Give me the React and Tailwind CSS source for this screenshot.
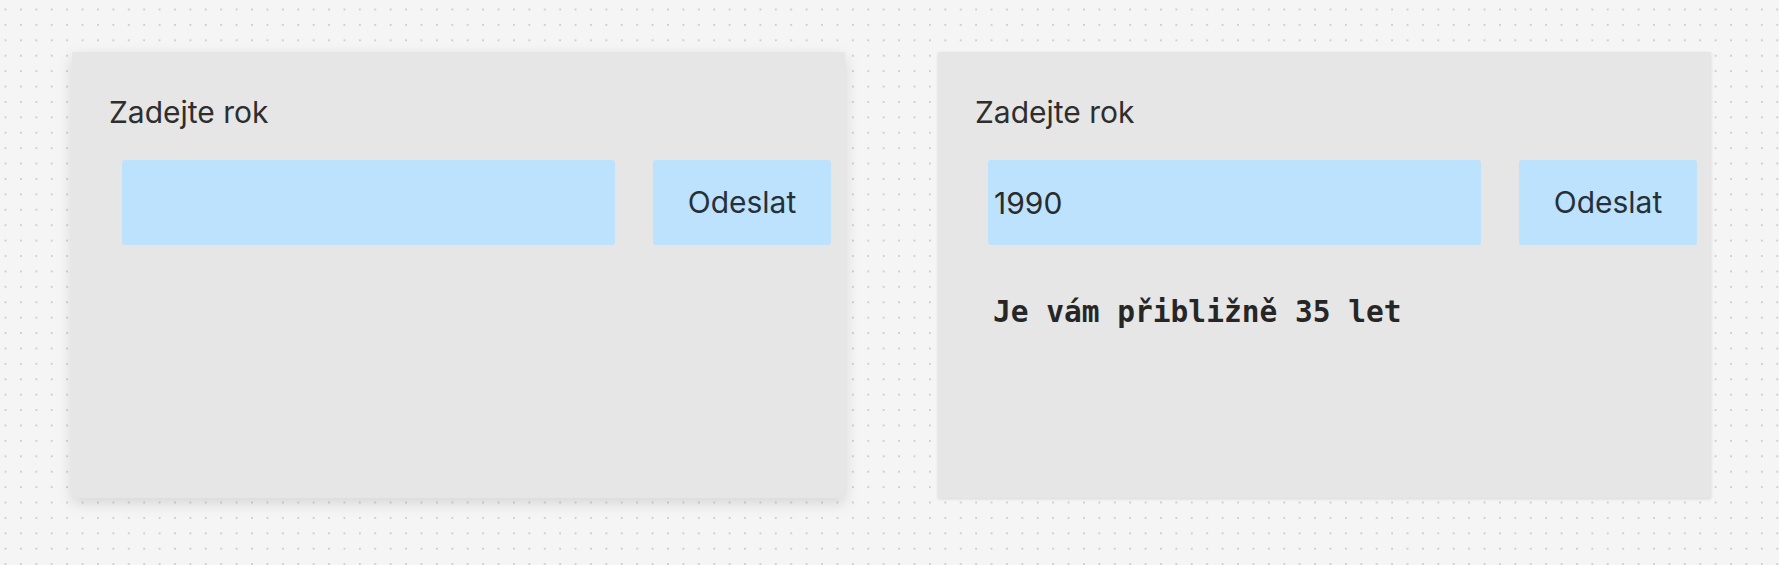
import React from "react";

function Card({ value, result, shadow }) {
  return (
    <div
      className={`w-[773px] h-[446px] bg-[#e6e6e6] pt-[42px] ${shadow}`}
      style={{ fontFamily: "Inter, 'Noto Sans', sans-serif" }}
    >
      <div className="pl-[37px] text-[30px] leading-[36px] text-[#2e2e2e]">Zadejte rok</div>
      <div className="flex mt-[30px] pl-[50px] gap-[38px]">
        <input
          readOnly
          value={value}
          className="w-[493px] h-[85px] bg-[#bde2fd] rounded-[3px] pl-[6px] text-[30px] text-[#2b2b2b] outline-none border-0"
          style={{ fontFamily: "Inter, 'Noto Sans', sans-serif" }}
        />
        <button className="w-[178px] h-[85px] bg-[#bde2fd] rounded-[3px] text-[30px] text-[#26303a] flex items-center justify-center">
          Odeslat
        </button>
      </div>
      {result && (
        <div
          className="mt-[49px] pl-[55px] text-[29.5px] leading-[36px] font-bold text-[#262626]"
          style={{ fontFamily: "'DejaVu Sans Mono', 'Liberation Mono', monospace" }}
        >
          {result}
        </div>
      )}
    </div>
  );
}

export default function App() {
  return (
    <div className="min-h-screen w-full bg-[#f5f5f5] bg-[radial-gradient(circle,#c6c6c6_0.6px,transparent_1px)] bg-[length:15.42px_15.42px] bg-[position:-2.2px_1.8px] pt-[52px] pl-[72px] flex gap-[93px] items-start">
      <Card value="" shadow="shadow-[0_5px_14px_rgba(0,0,0,0.13)]" />
      <Card value="1990" result="Je vám přibližně 35 let" shadow="shadow-[0_1px_3px_rgba(0,0,0,0.12)]" />
    </div>
  );
}
